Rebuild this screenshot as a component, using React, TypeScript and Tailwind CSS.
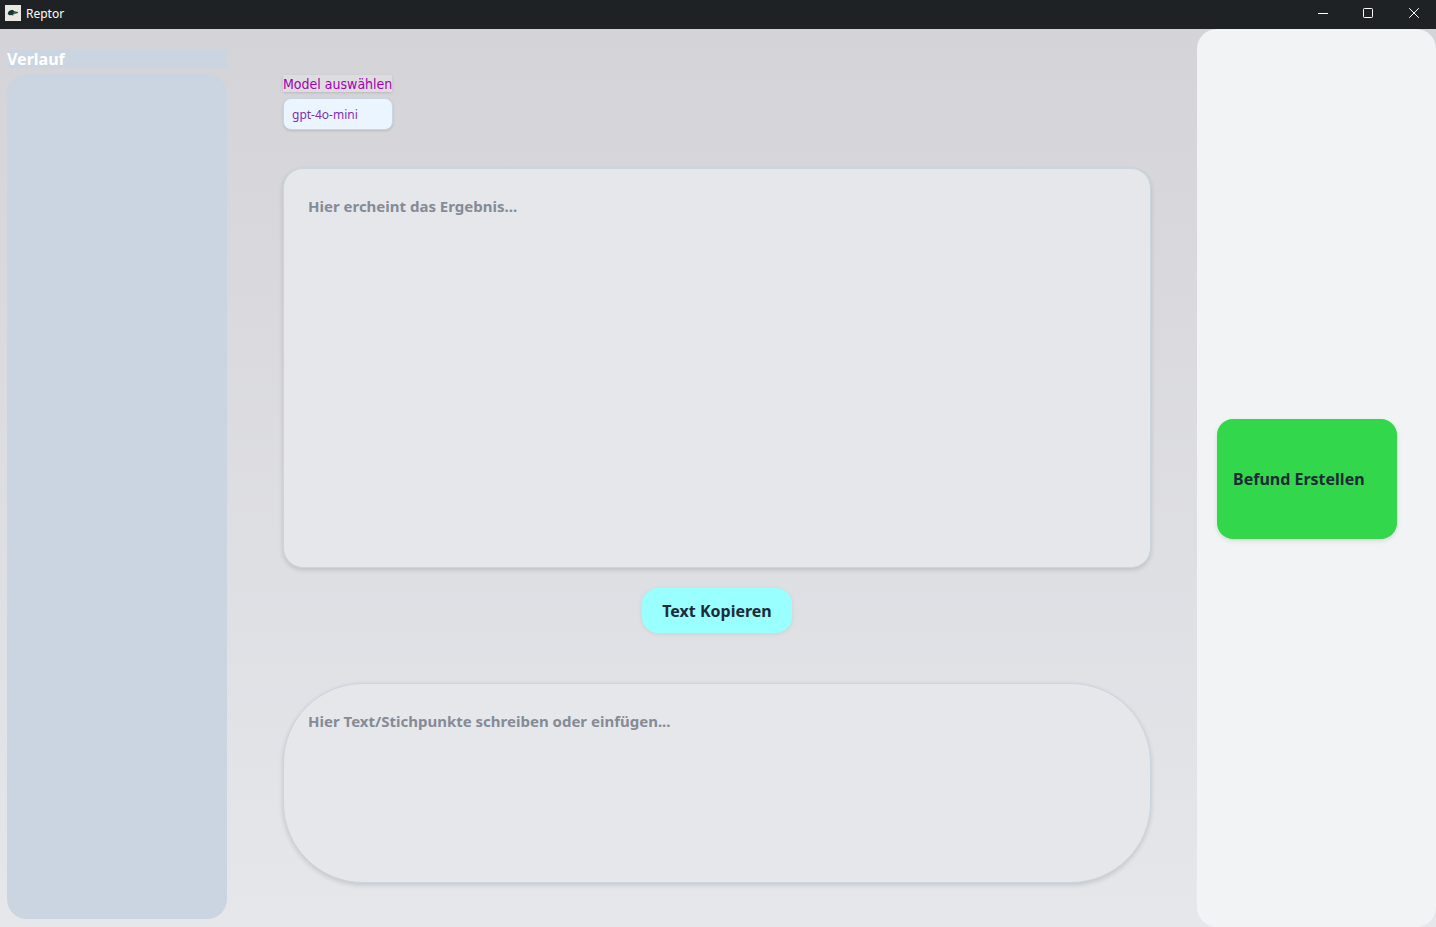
import { useState } from "react";

function AppIcon() {
  return (
    <svg viewBox="0 0 16 16" className="size-4 shrink-0" aria-hidden="true">
      <rect width="16" height="16" fill="#e9e8e2" />
      <path
        d="M2.8 8.2 3.8 6.2 6 5.1 8.2 5 9 6.2 12.8 6.9 13 7.8 11.4 8.5 8.4 8.7 9.6 9.3 7.6 9.6 8.6 10.8 6.4 10.1 4.4 10.2 3 9.3z"
        fill="#12382f"
      />
      <path d="M8 7.6 12 7.4" stroke="#6c8a7e" strokeWidth="0.4" />
    </svg>
  );
}

function TitleBar() {
  return (
    <header className="flex h-[29px] shrink-0 items-center bg-[#1e2224] pb-[3px] pl-[5px] text-white">
      <AppIcon />
      <span className="ml-[5px] flex-1 pt-0.5 text-xs leading-4">Reptor</span>
      <button type="button" aria-label="Minimieren" className="flex h-full w-[45px] items-center justify-center">
        <svg viewBox="0 0 10 10" className="size-2.5" fill="none" stroke="currentColor" shapeRendering="crispEdges">
          <path d="M0 5.5h10" />
        </svg>
      </button>
      <button type="button" aria-label="Maximieren" className="flex h-full w-[46px] items-center justify-center">
        <svg viewBox="0 0 10 10" className="size-2.5" fill="none" stroke="currentColor">
          <rect x="0.5" y="0.5" width="9" height="9" rx="0.8" />
        </svg>
      </button>
      <button type="button" aria-label="Schließen" className="flex h-full w-[45px] items-center justify-center">
        <svg viewBox="0 0 10 10" className="size-2.5" fill="none" stroke="currentColor">
          <path d="M0.2 0.2l9.6 9.6M9.8 0.2L0.2 9.8" />
        </svg>
      </button>
    </header>
  );
}

const fieldClasses =
  "block w-full resize-none border border-[#cbd5e1] bg-[#e5e7eb] px-6 py-[27px] text-[15px] leading-5 font-bold text-[#1f2937] shadow-[0_2px_5px_rgba(0,0,0,0.14)] outline-none placeholder:text-[#858b96]";

export default function App() {
  const [result, setResult] = useState("");
  const [notes, setNotes] = useState("");
  const [model, setModel] = useState("gpt-4o-mini");

  return (
    <div className="flex min-h-screen flex-col font-['Noto_Sans','Open_Sans',sans-serif]">
      <TitleBar />
      <div className="flex flex-1 bg-linear-to-b from-[#d4d3d8] to-[#e5e7eb]">
        <aside className="flex w-[227px] shrink-0 flex-col gap-1.5 pt-5 pb-2 pl-[7px]">
          <h2 className="h-[19px] bg-[#cbd5e1] text-base leading-5 font-bold text-white">Verlauf</h2>
          <div className="flex-1 rounded-[20px] bg-[#cbd5e1]" />
        </aside>

        <main className="flex min-w-0 flex-1 flex-col pt-[46px] pr-[46px] pl-14">
          <div className="flex flex-col items-start gap-1.5">
            <label
              htmlFor="model"
              className="h-[17px] bg-[#dddddf] font-['DejaVu_Sans_Condensed','Noto_Sans',sans-serif] text-sm leading-[19px] text-[#a400b4] shadow-sm"
            >
              Model auswählen
            </label>
            <select
              id="model"
              value={model}
              onChange={(e) => setModel(e.target.value)}
              className="h-8 w-[110px] appearance-none rounded-lg border border-[#cbd5e1] bg-[#ebf5ff] px-2 pt-0.5 text-xs text-[#7e2fb5] shadow-sm outline-none"
            >
              <option>gpt-4o-mini</option>
              <option>gpt-4o</option>
            </select>
          </div>

          <textarea
            aria-label="Ergebnis"
            placeholder="Hier ercheint das Ergebnis..."
            value={result}
            onChange={(e) => setResult(e.target.value)}
            className={`${fieldClasses} mt-[38px] h-[400px] rounded-[20px]`}
          />
          <button
            type="button"
            onClick={() => navigator.clipboard?.writeText(result)}
            className="mt-5 h-[45px] w-[150px] self-center rounded-2xl bg-[#99ffff] text-base font-bold text-[#1f2937] shadow-[0_1px_4px_rgba(0,0,0,0.08)]"
          >
            Text Kopieren
          </button>
          <textarea
            aria-label="Stichpunkte"
            placeholder="Hier Text/Stichpunkte schreiben oder einfügen..."
            value={notes}
            onChange={(e) => setNotes(e.target.value)}
            className={`${fieldClasses} mt-[50px] h-[200px] rounded-[80px]`}
          />
        </main>

        <aside className="flex w-[239px] shrink-0 flex-col justify-center rounded-[20px] bg-[#f1f3f5] pt-0.5 pl-5">
          <button
            type="button"
            className="h-[120px] w-[180px] rounded-2xl bg-[#32d74b] px-4 text-left text-base font-bold text-[#1f2937] shadow-[0_2px_5px_rgba(0,0,0,0.1)]"
          >
            Befund Erstellen
          </button>
        </aside>
      </div>
    </div>
  );
}
